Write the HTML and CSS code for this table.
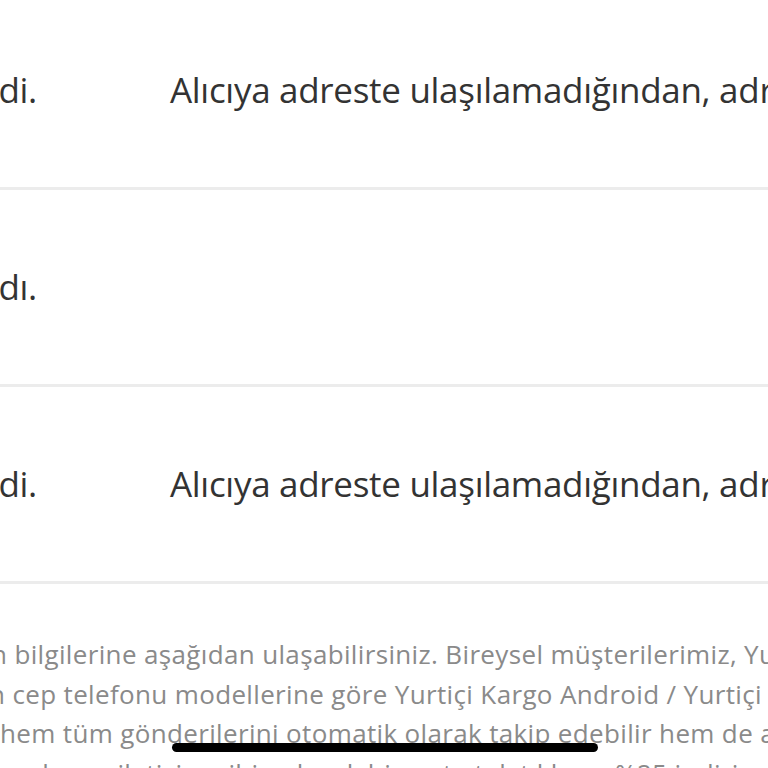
FILE: index.html
```html
<!DOCTYPE html>
<html lang="tr">
<head>
<meta charset="utf-8">
<title>Kargo Takip</title>
<link rel="stylesheet" href="styles.css">
</head>
<body>
<main class="page">
  <section class="table">
    <div class="row">
      <div class="cell status"><span>Teslim edilemedi.</span></div>
      <div class="cell desc">Alıcıya adreste ulaşılamadığından, adresine not bırakıldı.</div>
    </div>
    <div class="row">
      <div class="cell status"><span>Dağıtıma çıkarıldı.</span></div>
      <div class="cell desc"></div>
    </div>
    <div class="row">
      <div class="cell status"><span>Teslim edilemedi.</span></div>
      <div class="cell desc">Alıcıya adreste ulaşılamadığından, adresine not bırakıldı.</div>
    </div>
  </section>
  <section class="info">
    <p class="line l1">n bilgilerine aşağıdan ulaşabilirsiniz. Bireysel müşterilerimiz, Yurtiçi Kargo</p>
    <p class="line l2">n cep telefonu modellerine göre Yurtiçi Kargo Android / Yurtiçi Kargo iOS</p>
    <p class="line l3">hem tüm gönderilerini otomatik olarak takip edebilir hem de adresten</p>
    <p class="line l4">naplama, iletişim gibi pek çok hizmete tek tıkla ve %25 indirim fırsatıyla</p>
  </section>
</main>
<div class="home-indicator"></div>
</body>
</html>
```
FILE: styles.css
```css
html, body {
  margin: 0;
  padding: 0;
  background: #ffffff;
  overflow: hidden;
  width: 768px;
  height: 768px;
}

body {
  font-family: "Open Sans", "Noto Sans", sans-serif;
  position: relative;
}

.page {
  width: 768px;
  overflow: hidden;
}

.table {
  margin-top: -7px;
}

.row {
  display: grid;
  grid-template-columns: 170px 1fr;
  height: 194px;
  align-items: center;
  border-bottom: 3px solid #ececec;
  color: #333333;
  font-size: 35px;
  line-height: 44px;
  letter-spacing: -0.3px;
}

.cell {
  white-space: nowrap;
}

.status {
  display: flex;
  justify-content: flex-end;
  padding-right: 133px;
  overflow: hidden;
}

.status span {
  flex: none;
}

.info {
  padding-top: 51px;
  color: #8a8a8a;
  font-size: 26px;
  line-height: 39.5px;
  letter-spacing: 0.35px;
}

.line {
  margin: 0;
  white-space: nowrap;
}

.l1 { margin-left: -9px; }
.l2 { margin-left: -11px; }
.l3 { margin-left: 0; }
.l4 { margin-left: -5px; }

.home-indicator {
  position: absolute;
  left: 172px;
  top: 743px;
  width: 426px;
  height: 9px;
  border-radius: 5px;
  background: #000000;
}
```
